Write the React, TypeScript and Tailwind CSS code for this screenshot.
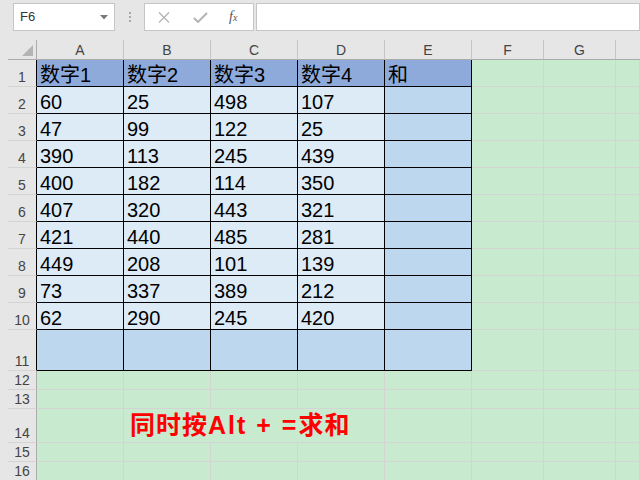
import React from "react";

const data: string[][] = [
  ["数字1", "数字2", "数字3", "数字4", "和"],
  ["60", "25", "498", "107", ""],
  ["47", "99", "122", "25", ""],
  ["390", "113", "245", "439", ""],
  ["400", "182", "114", "350", ""],
  ["407", "320", "443", "321", ""],
  ["421", "440", "485", "281", ""],
  ["449", "208", "101", "139", ""],
  ["73", "337", "389", "212", ""],
  ["62", "290", "245", "420", ""],
  ["", "", "", "", ""],
];

const cols = ["A", "B", "C", "D", "E", "F", "G"];

function RowHead({ n, dark }: { n: number; dark: boolean }) {
  return (
    <div
      className={
        "flex items-end justify-center border-b border-r border-b-[#d4d4d4] pb-[1px] text-[14px] leading-[16px] text-[#444] " +
        (dark ? "border-r-black" : "border-r-[#ababab]")
      }
    >
      {n}
    </div>
  );
}

function Green() {
  return <div className="border-b border-r border-[#d4d4d4] bg-[#c8ebcf]" />;
}

export default function App() {
  const font = "font-[family-name:'Liberation_Sans','Noto_Sans_CJK_SC',sans-serif]";
  return (
    <div className={"relative h-[480px] w-[640px] overflow-hidden bg-[#e6e6e6] " + font}>
      {/* toolbar */}
      <div className="flex h-[40px] items-start pt-[3px]">
        <div className="ml-[13px] flex h-[28px] w-[102px] items-center justify-between border border-[#c6c6c6] bg-white pl-[6px] pr-[6px]">
          <span className="text-[13px] text-[#333]">F6</span>
          <svg width="8" height="5" viewBox="0 0 8 5">
            <path d="M0 0 L8 0 L4 4.5 Z" fill="#7a7a7a" />
          </svg>
        </div>
        <div className="ml-[14px] mt-[9px] flex flex-col gap-[2px]">
          <div className="h-[2px] w-[2px] bg-[#a8a8a8]" />
          <div className="h-[2px] w-[2px] bg-[#a8a8a8]" />
          <div className="h-[2px] w-[2px] bg-[#a8a8a8]" />
        </div>
        <div className="ml-[13px] flex h-[28px] w-[110px] items-center border border-[#c6c6c6] bg-white">
          <svg className="ml-[13px]" width="12" height="11" viewBox="0 0 12 11">
            <path d="M1 0.5 L11 10.5 M11 0.5 L1 10.5" stroke="#b4b4b4" strokeWidth="1.3" />
          </svg>
          <svg className="ml-[23px]" width="15" height="11" viewBox="0 0 15 11">
            <path d="M1 6 L5 10 L14 1" stroke="#b4b4b4" strokeWidth="2" fill="none" />
          </svg>
          <span className="ml-[21px] font-[family-name:'Liberation_Serif',serif] text-[14px] italic leading-none text-[#555]">
            f<span className="text-[10px]">x</span>
          </span>
        </div>
        <div className="ml-[2px] h-[28px] flex-1 border border-[#c6c6c6] bg-white" />
      </div>

      {/* sheet */}
      <div className="ml-[8px] grid grid-cols-[29px_87px_87px_87px_87px_87px_72px_72px_1fr] grid-rows-[20px_27px_27px_27px_27px_27px_27px_27px_27px_27px_27px_41px_19px_19px_34px_19px_19px]">
        {/* corner */}
        <div className="relative border-b border-r border-b-[#ababab] border-r-[#ababab]">
          <svg className="absolute bottom-[3px] right-[3px]" width="11" height="11" viewBox="0 0 11 11">
            <path d="M11 0 L11 11 L0 11 Z" fill="#b4b4b4" />
          </svg>
        </div>
        {cols.map((c) => (
          <div
            key={c}
            className="flex items-end justify-center border-b border-r border-b-[#ababab] border-r-[#c4c4c4] pb-[1px] text-[14px] leading-[16px] text-[#444]"
          >
            {c}
          </div>
        ))}
        <div className="border-b border-b-[#ababab]" />

        {data.map((row, ri) => (
          <React.Fragment key={ri}>
            <RowHead n={ri + 1} dark={true} />
            {row.map((v, ci) => {
              let bg = "bg-[#ddebf7]";
              if (ri === 0) bg = "bg-[#8eaadb]";
              else if (ci === 4 || ri === 10) bg = "bg-[#bdd7ee]";
              return (
                <div
                  key={ci}
                  className={
                    "flex items-end border-b border-r border-black pb-[1px] pl-[3px] text-[20px] leading-[20px] text-black whitespace-nowrap " +
                    bg
                  }
                >
                  {v}
                </div>
              );
            })}
            <Green />
            <Green />
            <Green />
          </React.Fragment>
        ))}

        {[12, 13, 14, 15, 16].map((n) => (
          <React.Fragment key={n}>
            <RowHead n={n} dark={false} />
            {n === 14 ? (
              <>
                <Green />
                <div className="col-span-3 flex items-end border-b border-r border-[#d4d4d4] bg-[#c8ebcf] pb-[3px] pl-[6px]">
                  <span className="whitespace-nowrap font-[family-name:'Noto_Sans_CJK_SC',sans-serif] text-[25px] font-bold leading-[28px] tracking-[1px] text-[#ff0000]">
                    同时按
                    <span className="font-[family-name:'Liberation_Sans',sans-serif] tracking-[2px]">Alt + =</span>
                    求和
                  </span>
                </div>
                <Green />
                <Green />
                <Green />
                <Green />
              </>
            ) : (
              <>
                <Green />
                <Green />
                <Green />
                <Green />
                <Green />
                <Green />
                <Green />
                <Green />
              </>
            )}
          </React.Fragment>
        ))}
      </div>
    </div>
  );
}
